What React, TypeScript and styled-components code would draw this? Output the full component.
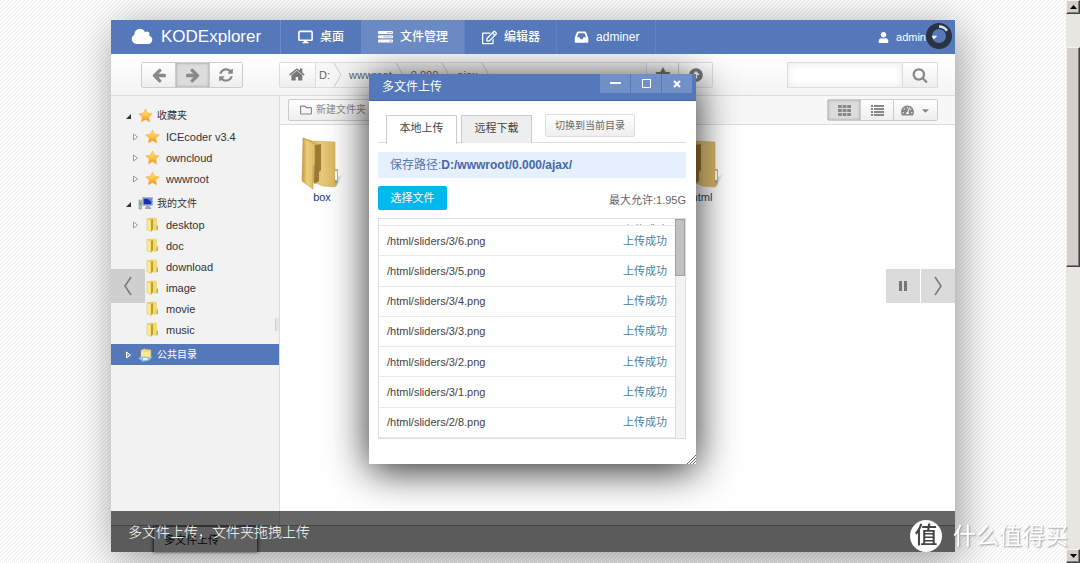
import React from "react";
import styled, { createGlobalStyle, css } from "styled-components";
import { FaRegEdit, FaUser, FaTachometerAlt, FaCaretDown, FaArrowAltCircleUp, FaRegFolder } from "react-icons/fa";

const BLUE = "#5578bb";

const Global = createGlobalStyle`
  * { box-sizing: border-box; }
  body {
    margin: 0;
    font-family: "Liberation Sans", "Noto Sans CJK SC", sans-serif;
    font-size: 11px;
    line-height: 14px;
    color: #444;
    background: #fff linear-gradient(135deg, #ebebeb 12.5%, #fff 12.5%, #fff 50%, #ebebeb 50%, #ebebeb 62.5%, #fff 62.5%) 0 0 / 4px 4px;
  }
  button, input { font: inherit; color: inherit; margin: 0; padding: 0; border: 0; background: none; }
  button { cursor: pointer; }
  a { color: inherit; text-decoration: none; }
  svg { display: block; flex: none; }
  ul { list-style: none; margin: 0; padding: 0; }
`;

/* ---------- icons ---------- */

const glyphs = {
  cloud: ["0 0 2048 1792", "M1984 1152q0 159-112.5 271.5t-271.5 112.5h-1088q-185 0-316.5-131.5t-131.5-316.5q0-132 71-241.5t187-163.5q-2-28-2-43 0-212 150-362t362-150q158 0 286.5 88t187.5 230q70-62 166-62 106 0 181 75t75 181q0 75-41 138 129 30 213 134.5t84 239.5z"],
  home: ["0 0 1792 1792", "M1408 992v480q0 26-19 45t-45 19h-384v-384h-256v384h-384q-26 0-45-19t-19-45v-480q0-1 .5-3t.5-3l575-474 575 474q1 2 1 6zm223-69l-62 74q-8 9-21 11h-3q-13 0-21-7l-692-577-692 577q-12 8-24 7-13-2-21-11l-62-74q-8-10-7-23.5t11-21.5l719-599q32-26 76-26t76 26l244 204v-195q0-14 9-23t23-9h192q14 0 23 9t9 23v408l219 182q10 8 11 21.5t-7 23.5z"],
  search: ["0 0 1792 1792", "M1216 832q0-185-131.5-316.5t-316.5-131.5-316.5 131.5-131.5 316.5 131.5 316.5 316.5 131.5 316.5-131.5 131.5-316.5zm512 832q0 52-38 90t-90 38q-54 0-90-38l-343-342q-179 124-399 124-143 0-273.5-55.5t-225-150-150-225-55.5-273.5 55.5-273.5 150-225 225-150 273.5-55.5 273.5 55.5 225 150 150 225 55.5 273.5q0 220-124 399l343 343q37 37 37 90z"],
  star: ["0 0 1792 1792", "M1728 647q0 22-26 48l-363 354 86 500q1 7 1 20 0 21-10.5 35.5t-30.5 14.5q-19 0-40-12l-449-236-449 236q-22 12-40 12-21 0-31.5-14.5t-10.5-35.5q0-6 2-20l86-500-364-354q-25-27-25-48 0-37 56-46l502-73 225-455q19-41 49-41t49 41l225 455 502 73q56 9 56 46z"],
  arrow: ["0 0 1792 1792", "M1664 896v128q0 53-32.5 90.5t-84.5 37.5h-704l293 294q38 36 38 90t-38 90l-75 76q-37 37-90 37-52 0-91-37l-651-652q-37-37-37-90 0-52 37-91l651-650q38-38 91-38 52 0 90 38l75 74q38 38 38 91t-38 91l-293 293h704q52 0 84.5 37.5t32.5 90.5z"],
  refresh: ["0 0 1792 1792", "M1639 1056q0 5-1 7-64 268-268 434.5t-478 166.5q-146 0-282.5-55t-243.5-157l-129 129q-19 19-45 19t-45-19-19-45v-448q0-26 19-45t45-19h448q26 0 45 19t19 45-19 45l-137 137q71 66 161 102t187 36q134 0 250-65t186-179q11-17 53-117 8-23 30-23h192q13 0 22.5 9.5t9.5 22.5zm25-800v448q0 26-19 45t-45 19h-448q-26 0-45-19t-19-45 19-45l138-138q-148-137-349-137-134 0-250 65t-186 179q-11 17-53 117-8 23-30 23h-199q-13 0-22.5-9.5t-9.5-22.5v-7q65-268 270-434.5t480-166.5q146 0 284 55.5t245 156.5l130-129q19-19 45-19t45 19 19 45z"],
} as const;

const Glyph = ({ name, size, width, flip }: { name: keyof typeof glyphs; size: number; width?: number; flip?: boolean }) => (
  <svg width={width ?? size} height={size} viewBox={glyphs[name][0]} fill="currentColor" aria-hidden="true">
    <path d={glyphs[name][1]} transform={flip ? "translate(1792 0) scale(-1 1)" : undefined} />
  </svg>
);

const DesktopIcon = () => (
  <svg width="15" height="14" viewBox="0 0 15 14" fill="none" stroke="currentColor" aria-hidden="true">
    <rect x="0.9" y="1.4" width="13.2" height="8.8" rx="0.8" strokeWidth="1.6" />
    <path d="M7.5 10v2.500" strokeWidth="3" />
    <path d="M4.500 12.600h6" strokeWidth="1.400" />
  </svg>
);
const TasksIcon = () => (
  <svg width="15" height="14" viewBox="0 0 15 14" fill="currentColor" aria-hidden="true">
    <path d="M1 1h13q1 0 1 1v1q0 1-1 1H1Q0 4 0 3V2q0-1 1-1zM1 5.300h13q1 0 1 1v1q0 1-1 1H1q-1 0-1-1v-1q0-1 1-1zM1 9.600h13q1 0 1 1v1q0 1-1 1H1q-1 0-1-1v-1q0-1 1-1z" />
    <path d="M9 2.500h5M5 6.800h9M11 11.100h3" stroke="#8da5d2" strokeWidth=".8" />
  </svg>
);
const InboxIcon = () => (
  <svg width="15" height="14" viewBox="0 0 15 14" fill="currentColor" fillRule="evenodd" aria-hidden="true">
    <path d="M4 1.500h7q.8 0 1.100.7L14 7q.3.7.3 1.400V12q0 .8-.8.8H1.500q-.8 0-.8-.8V8.400Q.7 7.700 1 7L2.900 2.200q.3-.7 1.100-.7zM4.500 3.300 3 7.300h2.500l1 1.900h2l1-1.900H12l-1.500-4z" />
  </svg>
);
const ThIcon = () => (
  <svg width="13" height="11" viewBox="0 0 13 11" fill="currentColor" aria-hidden="true">
    {[0, 4, 8].map((y) => [0, 4.6, 9.2].map((x) => <rect key={`${x}-${y}`} x={x} y={y} width="3.800" height="3" />))}
  </svg>
);
const ListIcon = () => (
  <svg width="13" height="11" viewBox="0 0 13 11" fill="currentColor" aria-hidden="true">
    {[0, 3, 6, 9].map((y) => (
      <g key={y}><rect y={y} width="2" height="2" /><rect x="3" y={y} width="10" height="2" /></g>
    ))}
  </svg>
);
const GoldStar = () => (
  <svg width="15" height="15" viewBox="0 0 15 15" aria-hidden="true">
    <defs><linearGradient id="gold" x2="0" y2="1"><stop stopColor="#ffe873" /><stop offset=".5" stopColor="#ffc744" /><stop offset="1" stopColor="#f58a1c" /></linearGradient></defs>
    <path d="M7.500 1l2 4.300 4.700.6-3.500 3.200.9 4.700-4.100-2.300-4.100 2.300.9-4.700L.8 5.900l4.700-.6z" fill="url(#gold)" stroke="#f3b04b" strokeWidth=".7" strokeLinejoin="round" />
  </svg>
);
const SmallFolder = () => (
  <svg width="15" height="15" viewBox="0 0 15 15" aria-hidden="true">
    <path d="M2 1.500 6 .8h5.500v12.500H6L2 12.500z" fill="#e9cf62" />
    <path d="M2 1.500 6 3v11.500L2 12.500z" fill="#fdec8f" stroke="#d8b94c" strokeWidth=".5" />
    <path d="M6 3l2-1v10l-2 2.500z" fill="#bf9c35" />
    <path d="M8 1h3.700v12.500H8z" fill="#f1da6e" />
    <path d="M11.500 8.500H13V13h-1.500z" fill="#c9ab48" />
  </svg>
);
const ComputerIcon = () => (
  <svg width="15" height="15" viewBox="0 0 15 15" aria-hidden="true">
    <rect x="1" y="4" width="2.500" height="9" fill="#b4bcc6" stroke="#7c8795" strokeWidth=".5" />
    <rect x="1.500" y="6" width="1.500" height="3" fill="#55b848" />
    <rect x="4.500" y="1.500" width="10" height="8" fill="#c9d2df" stroke="#8490a3" strokeWidth=".5" />
    <rect x="5.500" y="2.500" width="8" height="6" fill="#1230b8" />
    <path d="M9 2.500h4.500V6z" fill="#5f8af0" />
    <path d="M8 10h3.500l2 3H7z" fill="#9aa5b5" />
  </svg>
);
const SharedIcon = () => (
  <svg width="15" height="15" viewBox="0 0 15 15" aria-hidden="true">
    <path d="M3 3l3-1 7 1v7H3z" fill="#f3dc7a" stroke="#d2b550" strokeWidth=".5" />
    <path d="M3 5h9v5H3z" fill="#fbe98f" />
    <path d="M0 11l5-1.500 9.500.5-3.500 3.500-6 1.200z" fill="#8fc6de" />
    <path d="M5 11h5l-1 2H5z" fill="#e4f4fb" />
  </svg>
);
const BigFolder = () => (
  <svg width="46" height="54" viewBox="0 0 46 54" aria-hidden="true">
    <defs>
      <linearGradient id="flap"><stop stopColor="#c79a3c" /><stop offset=".4" stopColor="#ecce7c" /><stop offset="1" stopColor="#dcb865" /></linearGradient>
      <linearGradient id="back"><stop stopColor="#c79e48" /><stop offset=".6" stopColor="#e8c97b" /><stop offset="1" stopColor="#dcb865" /></linearGradient>
      <linearGradient id="cast"><stop stopColor="#888" /><stop offset="1" stopColor="#fff" stopOpacity="0" /></linearGradient>
    </defs>
    <path d="M36 43l10-7-9 15z" fill="url(#cast)" opacity=".7" />
    <path d="M4 2l9 3 23 1v45l-12-1-10-4z" fill="url(#back)" stroke="#c9a14c" strokeWidth=".5" />
    <path d="M16 9l6-1v26l-2 2v9l-5 3z" fill="#86631d" opacity=".75" />
    <path d="M4 2l12 6v20l-2 3v22L3 45z" fill="url(#flap)" stroke="#b78f3a" strokeWidth=".5" />
    <path d="M36 33h3v14l-3 4z" fill="#d8b45d" />
    <path d="M36 35h2v9h-2z" fill="#fff" /><path d="M36 44h2v3h-2z" fill="#8b9fd0" />
  </svg>
);

/* ---------- page frame ---------- */

const Page = styled.div`
  min-height: 100vh;
  display: grid;
  grid-template-columns: minmax(0, 1fr) 14px;
`;
const Stage = styled.main`
  display: flex;
  padding: 20px 111px 11px;
`;
const Slide = styled.section`
  position: relative;
  flex: 1;
  min-width: 0;
  display: flex;
  flex-direction: column;
  background: #fff;
  box-shadow: 4px 8px 40px rgba(0, 0, 0, 0.4);
`;
const PageScroll = styled.div`
  display: flex;
  flex-direction: column;
  background: #e8e6e1;
`;
const raised = css`
  background: #d4d0c8;
  border: 1px solid;
  border-color: #f4f2ee #404040 #404040 #f4f2ee;
  box-shadow: inset -1px -1px #808080;
`;
const ScrollArrow = styled.button<{ $down?: boolean }>`
  ${raised}
  height: 14px;
  display: grid;
  place-items: center;
  margin-top: ${(p) => (p.$down ? "auto" : "0")};
  svg { transform: ${(p) => (p.$down ? "none" : "rotate(180deg)")}; }
`;
const PageThumb = styled.div`
  ${raised}
  height: 220px;
  margin-top: 33px;
`;

/* ---------- header ---------- */

const Header = styled.header`
  position: relative;
  z-index: 2;
  display: flex;
  height: 34px;
  background: ${BLUE};
  color: #fff;
`;
const Brand = styled.a`
  display: flex;
  align-items: center;
  gap: 8px;
  width: 170px;
  padding-left: 20px;
  border-right: 1px solid #6d8bc6;
  font-size: 17px;
`;
const NavItem = styled.a<{ $active?: boolean }>`
  display: flex;
  align-items: center;
  gap: 7px;
  padding: 0 17px;
  font-size: 12px;
  font-weight: 500;
  background: ${(p) => (p.$active ? "#6b8ac4" : "none")};
  & + & { box-shadow: inset -1px 0 #6282c1; }
`;
const UserMenu = styled.button`
  display: flex;
  align-items: center;
  gap: 7px;
  margin-left: auto;
  padding-right: 16px;
  svg:last-child { margin-left: -4px; }
`;
const Spinner = styled.span`
  position: absolute;
  right: 3px;
  top: 3px;
`;

/* ---------- toolbar ---------- */

const Toolbar = styled.div`
  display: flex;
  height: 42px;
  padding: 8px 17px 8px 30px;
  align-items: center;
  color: #888;
  background: linear-gradient(#fff, #f4f4f4);
  border-bottom: 1px solid #ddd;
`;
const Group = styled.div`
  display: flex;
  border: 1px solid #ccc;
  border-radius: 2px;
`;
const ToolButton = styled.button<{ $w: number; $h?: number; $on?: boolean }>`
  display: flex;
  align-items: center;
  justify-content: center;
  gap: 6px;
  width: ${(p) => p.$w}px;
  height: ${(p) => p.$h ?? 24}px;
  background: ${(p) => (p.$on ? "#dcdcdc" : "linear-gradient(#fff, #eee)")};
  box-shadow: ${(p) => (p.$on ? "inset 0 0 3px #999" : "none")};
  & + & { border-left: 1px solid #ccc; }
`;
const Address = styled(Group)`
  flex: 1;
  margin: 0 74px 0 36px;
  border-color: #ddd;
  background: #f7f7f7;
  color: #666;
  button { color: #777; }
`;
const Crumbs = styled.nav`
  flex: 1;
  display: flex;
  border-left: 1px solid #ddd;
  border-right: 1px solid #ddd;
`;
const Crumb = styled.a`
  display: flex;
  align-items: center;
  gap: 3px;
  padding-left: 3px;
  & + & { padding-left: 7px; }
`;
const CrumbEdge = () => (
  <svg width="9" height="24" viewBox="0 0 9 24" fill="none" stroke="#ccc" aria-hidden="true"><path d="M1 0l7 12-7 12" /></svg>
);
const SearchBox = styled.form`
  display: flex;
  border: 1px solid #ddd;
  input { width: 114px; height: 24px; padding: 0 6px; background: #fff; box-shadow: inset 0 0 8px #e8e8e8; }
  button { border-left: 1px solid #ddd; }
`;

/* ---------- body ---------- */

const Body = styled.div`
  flex: 1;
  display: flex;
`;
const Sidebar = styled.aside`
  position: relative;
  width: 169px;
  padding-top: 9px;
  display: flex;
  flex-direction: column;
  gap: 4px;
  background: #f2f2f2;
  border-right: 1px solid #ddd;
`;
const TreeRow = styled.a<{ $child?: boolean; $selected?: boolean }>`
  display: flex;
  align-items: center;
  height: 21px;
  padding-left: ${(p) => (p.$child ? 21 : 14)}px;
  font-size: ${(p) => (p.$child ? 11 : 10)}px;
  color: ${(p) => (p.$selected ? "#fff" : "#333")};
  background: ${(p) => (p.$selected ? BLUE : "none")};
  > svg:nth-child(2) { margin: 0 ${(p) => (p.$child ? 6 : 4)}px 0 5px; }
`;
const Splitter = styled.span`
  position: absolute;
  right: 0;
  top: 222px;
  width: 4px;
  height: 13px;
  background: #e6e6e6;
  border-left: 1px solid #ccc;
`;
const Twisty = ({ state, light }: { state: "open" | "closed" | "none"; light?: boolean }) => (
  <svg width="8" height="8" viewBox="0 0 8 8" aria-hidden="true">
    {state === "open" && <path d="M6 2v5H1z" fill="#333" />}
    {state === "closed" && <path d="M1.500 1l4 3-4 3z" fill={light ? "#8ea8d8" : "#fff"} stroke={light ? "#fff" : "#999"} />}
  </svg>
);
const Content = styled.div`
  flex: 1;
  min-width: 0;
`;
const Actions = styled.div`
  display: flex;
  align-items: center;
  justify-content: space-between;
  height: 29px;
  padding: 0 17px 0 8px;
  background: #f7f7f7;
  border-bottom: 1px solid #ddd;
  color: #888;
`;
const NewFolder = styled(ToolButton)`
  border: 1px solid #ccc;
  border-radius: 2px;
  font-size: 10px;
  gap: 4px;
`;
const Files = styled.div`
  display: grid;
  grid-template-columns: repeat(auto-fill, 76px);
  padding: 11px 4px;
`;
const FileItem = styled.a<{ $col: number }>`
  grid-column: ${(p) => p.$col};
  display: flex;
  flex-direction: column;
  align-items: center;
  color: #223a70;
`;
const TaskBar = styled.footer`
  height: 27px;
  padding-left: 42px;
  background: #e4e4e4;
  border-top: 1px solid #aaa;
  display: flex;
`;
const TaskButton = styled.button`
  width: 105px;
  padding: 0 10px;
  text-align: left;
  color: #111;
  border: 1px solid #777;
  border-bottom: 0;
  box-shadow: 0 0 3px #333;
  background: #eee;
`;

/* ---------- upload window ---------- */

const Dialog = styled.div`
  position: absolute;
  z-index: 1;
  left: 258px;
  top: 54px;
  width: 327px;
  padding-bottom: 25px;
  background: #fff;
  box-shadow: 0 6px 38px rgba(0, 0, 0, 0.85);
`;
const TitleBar = styled.div`
  display: flex;
  justify-content: space-between;
  height: 27px;
  padding: 0 4px 0 13px;
  font-size: 12px;
  line-height: 26px;
  color: #fff;
  background: ${BLUE};
  border-bottom: 1px solid #3f65ad;
`;
const WindowButtons = styled.div`
  display: flex;
  gap: 1px;
  button { width: 30px; height: 19px; display: grid; place-items: center; background: #7290c8; }
`;
const Pane = styled.div`
  padding: 13px 10px 0 9px;
`;
const Tabs = styled.div`
  display: flex;
  gap: 4px;
  height: 29px;
  padding-left: 8px;
  border-bottom: 1px solid #ddd;
`;
const Tab = styled.button<{ $on?: boolean }>`
  width: 71px;
  height: ${(p) => (p.$on ? 29 : 28)}px;
  margin: 1px 0 -1px;
  padding-bottom: 4px;
  border: 1px solid #ccc;
  border-bottom: 0;
  color: #444;
  background: ${(p) => (p.$on ? "#fff" : "#eee")};
  align-self: flex-start;
`;
const SwitchButton = styled.button`
  width: 90px;
  height: 23px;
  margin-left: 9px;
  border: 1px solid #ddd;
  border-radius: 2px;
  font-size: 10px;
  color: #666;
  background: linear-gradient(#fff, #eee);
`;
const SavePath = styled.p`
  margin: 9px 0 8px;
  padding: 0 12px;
  line-height: 26px;
  font-size: 12px;
  color: #5578ab;
  background: #e6effd;
  strong { color: #4767a8; }
`;
const PickRow = styled.div`
  display: flex;
  justify-content: space-between;
  align-items: flex-start;
  color: #666;
  span { padding-top: 7px; }
`;
const PickButton = styled.button`
  width: 69px;
  height: 24px;
  border-radius: 2px;
  color: #fff;
  background: #00b7ee;
`;
const UploadBox = styled.div`
  display: flex;
  height: 221px;
  margin-top: 8px;
  border: 1px solid #ddd;
`;
const UploadList = styled.ul`
  flex: 1;
  display: flex;
  flex-direction: column;
  overflow: hidden;
`;
const UploadRow = styled.li<{ $cut?: boolean }>`
  flex: ${(p) => (p.$cut ? "none" : 1)};
  height: ${(p) => (p.$cut ? "7px" : "auto")};
  padding: ${(p) => (p.$cut ? "4px 8px 0" : "0 8px")};
  overflow: hidden;
  display: flex;
  justify-content: space-between;
  align-items: ${(p) => (p.$cut ? "flex-start" : "center")};
  border-bottom: 1px solid #eaeaea;
  a { color: #4682a5; margin-left: auto; }
`;
const ListScroll = styled.div`
  width: 10px;
  background: #f3f3f3;
  border-left: 1px solid #ddd;
`;
const ListThumb = styled.div`
  height: 57px;
  margin-left: -1px;
  background: #c1c1c1;
  border: 1px solid #a0a0a0;
`;
const Grip = styled.span`
  position: absolute;
  right: 0;
  bottom: 0;
`;

/* ---------- slideshow overlay ---------- */

const Caption = styled.p`
  position: absolute;
  z-index: 3;
  inset: auto 0 0 0;
  margin: 0;
  padding: 1px 17px 0;
  font-size: 14px;
  font-weight: 300;
  line-height: 40px;
  color: #fff;
  background: rgba(0, 0, 0, 0.6);
`;
const SlideControls = styled.div<{ $side: "left" | "right" }>`
  position: absolute;
  z-index: 3;
  ${(p) => p.$side}: 0;
  top: 50%;
  transform: translateY(-50%);
  display: flex;
  gap: 1px;
  button { width: 34px; height: 34px; display: grid; place-items: center; background: rgba(0, 0, 0, 0.14); }
`;
const Watermark = styled.div`
  position: fixed;
  z-index: 4;
  right: 12px;
  bottom: 11px;
  display: flex;
  align-items: center;
  gap: 11px;
  font-size: 23px;
  line-height: 32px;
  color: #fff;
  text-shadow: 1px 1px 2px #999;
`;
const Seal = styled.span`
  width: 32px;
  height: 32px;
  border-radius: 50%;
  background: #fff;
  color: #444;
  font-weight: 500;
  line-height: 30px;
  text-align: center;
  text-shadow: none;
`;

const Chevron = ({ left }: { left?: boolean }) => (
  <svg width="10" height="22" viewBox="0 0 10 22" fill="none" stroke="#777" strokeWidth="1.500" aria-hidden="true">
    <path d={left ? "M8 2L2 11l6 9" : "M2 2l6 9-6 9"} />
  </svg>
);
const ArrowTip = () => <svg width="7" height="4" viewBox="0 0 7 4" aria-hidden="true"><path d="M0 0h7L3.500 4z" /></svg>;

const bookmarks = ["ICEcoder v3.4", "owncloud", "wwwroot"];
const folders = ["desktop", "doc", "download", "image", "movie", "music"];
const uploads = ["3/6", "3/5", "3/4", "3/3", "3/2", "3/1", "2/8"];

export default function App() {
  return (
    <>
      <Global />
      <Page>
        <Stage>
          <Slide>
            <Header>
              <Brand href="#"><Glyph name="cloud" size={20} width={22} />KODExplorer</Brand>
              <NavItem href="#"><DesktopIcon />桌面</NavItem>
              <NavItem href="#" $active><TasksIcon />文件管理</NavItem>
              <NavItem href="#"><FaRegEdit size={15} />编辑器</NavItem>
              <NavItem href="#"><InboxIcon />adminer</NavItem>
              <UserMenu><FaUser size={11} />admin<FaCaretDown size={10} /></UserMenu>
              <Spinner>
                <svg width="26" height="26" viewBox="0 0 26 26" fill="none" aria-hidden="true">
                  <circle cx="13" cy="13" r="10" stroke="#2b3242" strokeWidth="6" />
                  <path d="M13 3.500a9.500 9.500 0 0 1 8 4.300" stroke="#dde3ee" strokeWidth="2.500" />
                </svg>
              </Spinner>
            </Header>

            <Toolbar>
              <Group>
                <ToolButton $w={33} aria-label="后退"><Glyph name="arrow" size={16} /></ToolButton>
                <ToolButton $w={34} $on aria-label="前进"><Glyph name="arrow" size={16} flip /></ToolButton>
                <ToolButton $w={33} aria-label="刷新"><Glyph name="refresh" size={16} /></ToolButton>
              </Group>
              <Address>
                <ToolButton $w={35} aria-label="主页"><Glyph name="home" size={17} /></ToolButton>
                <Crumbs>
                  <Crumb href="#">D:<CrumbEdge /></Crumb>
                  <Crumb href="#">wwwroot<CrumbEdge /></Crumb>
                  <Crumb href="#">0.000<CrumbEdge /></Crumb>
                  <Crumb href="#">ajax<CrumbEdge /></Crumb>
                </Crumbs>
                <ToolButton $w={31} aria-label="收藏"><Glyph name="star" size={16} /></ToolButton>
                <ToolButton $w={34} aria-label="上级目录"><FaArrowAltCircleUp size={14} /></ToolButton>
              </Address>
              <SearchBox>
                <input type="search" aria-label="搜索" />
                <ToolButton $w={35} aria-label="搜索"><Glyph name="search" size={16} /></ToolButton>
              </SearchBox>
            </Toolbar>

            <Body>
              <Sidebar>
                <div>
                  <TreeRow href="#"><Twisty state="open" /><GoldStar />收藏夹</TreeRow>
                  {bookmarks.map((n) => <TreeRow href="#" $child key={n}><Twisty state="closed" /><GoldStar />{n}</TreeRow>)}
                </div>
                <div>
                  <TreeRow href="#"><Twisty state="open" /><ComputerIcon />我的文件</TreeRow>
                  {folders.map((n, i) => (
                    <TreeRow href="#" $child key={n}><Twisty state={i ? "none" : "closed"} /><SmallFolder />{n}</TreeRow>
                  ))}
                </div>
                <TreeRow href="#" $selected><Twisty state="closed" light /><SharedIcon />公共目录</TreeRow>
                <Splitter />
              </Sidebar>
              <Content>
                <Actions>
                  <NewFolder $w={90} $h={22}><FaRegFolder size={12} />新建文件夹</NewFolder>
                  <Group>
                    <ToolButton $w={32} $h={20} $on aria-label="图标"><ThIcon /></ToolButton>
                    <ToolButton $w={33} $h={20} aria-label="列表"><ListIcon /></ToolButton>
                    <ToolButton $w={44} $h={20} aria-label="主题"><FaTachometerAlt size={13} /><FaCaretDown size={11} /></ToolButton>
                  </Group>
                </Actions>
                <Files>
                  <FileItem href="#" $col={1}><BigFolder />box</FileItem>
                  <FileItem href="#" $col={6}><BigFolder />html</FileItem>
                </Files>
              </Content>
            </Body>
            <TaskBar><TaskButton>多文件上传</TaskButton></TaskBar>

            <Dialog role="dialog" aria-label="多文件上传">
              <TitleBar>
                多文件上传
                <WindowButtons>
                  <button aria-label="最小化"><svg width="11" height="3"><rect width="11" height="2" fill="#fff" /></svg></button>
                  <button aria-label="最大化"><svg width="9" height="9"><rect x=".5" y=".5" width="8" height="8" fill="none" stroke="#fff" /></svg></button>
                  <button aria-label="关闭"><svg width="8" height="8"><path d="M1 1l6 6M7 1L1 7" stroke="#fff" strokeWidth="2" /></svg></button>
                </WindowButtons>
              </TitleBar>
              <Pane>
                <Tabs>
                  <Tab $on>本地上传</Tab>
                  <Tab>远程下载</Tab>
                  <SwitchButton>切换到当前目录</SwitchButton>
                </Tabs>
                <SavePath>保存路径:<strong>D:/wwwroot/0.000/ajax/</strong></SavePath>
                <PickRow><PickButton>选择文件</PickButton><span>最大允许:1.95G</span></PickRow>
                <UploadBox>
                  <UploadList>
                    <UploadRow $cut><a href="#">上传成功</a></UploadRow>
                    {uploads.map((n) => <UploadRow key={n}>/html/sliders/{n}.png<a href="#">上传成功</a></UploadRow>)}
                  </UploadList>
                  <ListScroll><ListThumb /></ListScroll>
                </UploadBox>
              </Pane>
              <Grip><svg width="9" height="9" stroke="#666" aria-hidden="true"><path d="M0 9l9-9M3 9l6-6M6 9l3-3" /></svg></Grip>
            </Dialog>

            <SlideControls $side="left"><button aria-label="上一张"><Chevron left /></button></SlideControls>
            <SlideControls $side="right">
              <button aria-label="暂停"><svg width="8" height="10"><path d="M0 0h3v10H0zM5 0h3v10H5z" fill="#777" /></svg></button>
              <button aria-label="下一张"><Chevron /></button>
            </SlideControls>
            <Caption>多文件上传，文件夹拖拽上传</Caption>
          </Slide>
        </Stage>
        <PageScroll>
          <ScrollArrow aria-label="向上滚动"><ArrowTip /></ScrollArrow>
          <PageThumb />
          <ScrollArrow $down aria-label="向下滚动"><ArrowTip /></ScrollArrow>
        </PageScroll>
      </Page>
      <Watermark><Seal>值</Seal>什么值得买</Watermark>
    </>
  );
}
